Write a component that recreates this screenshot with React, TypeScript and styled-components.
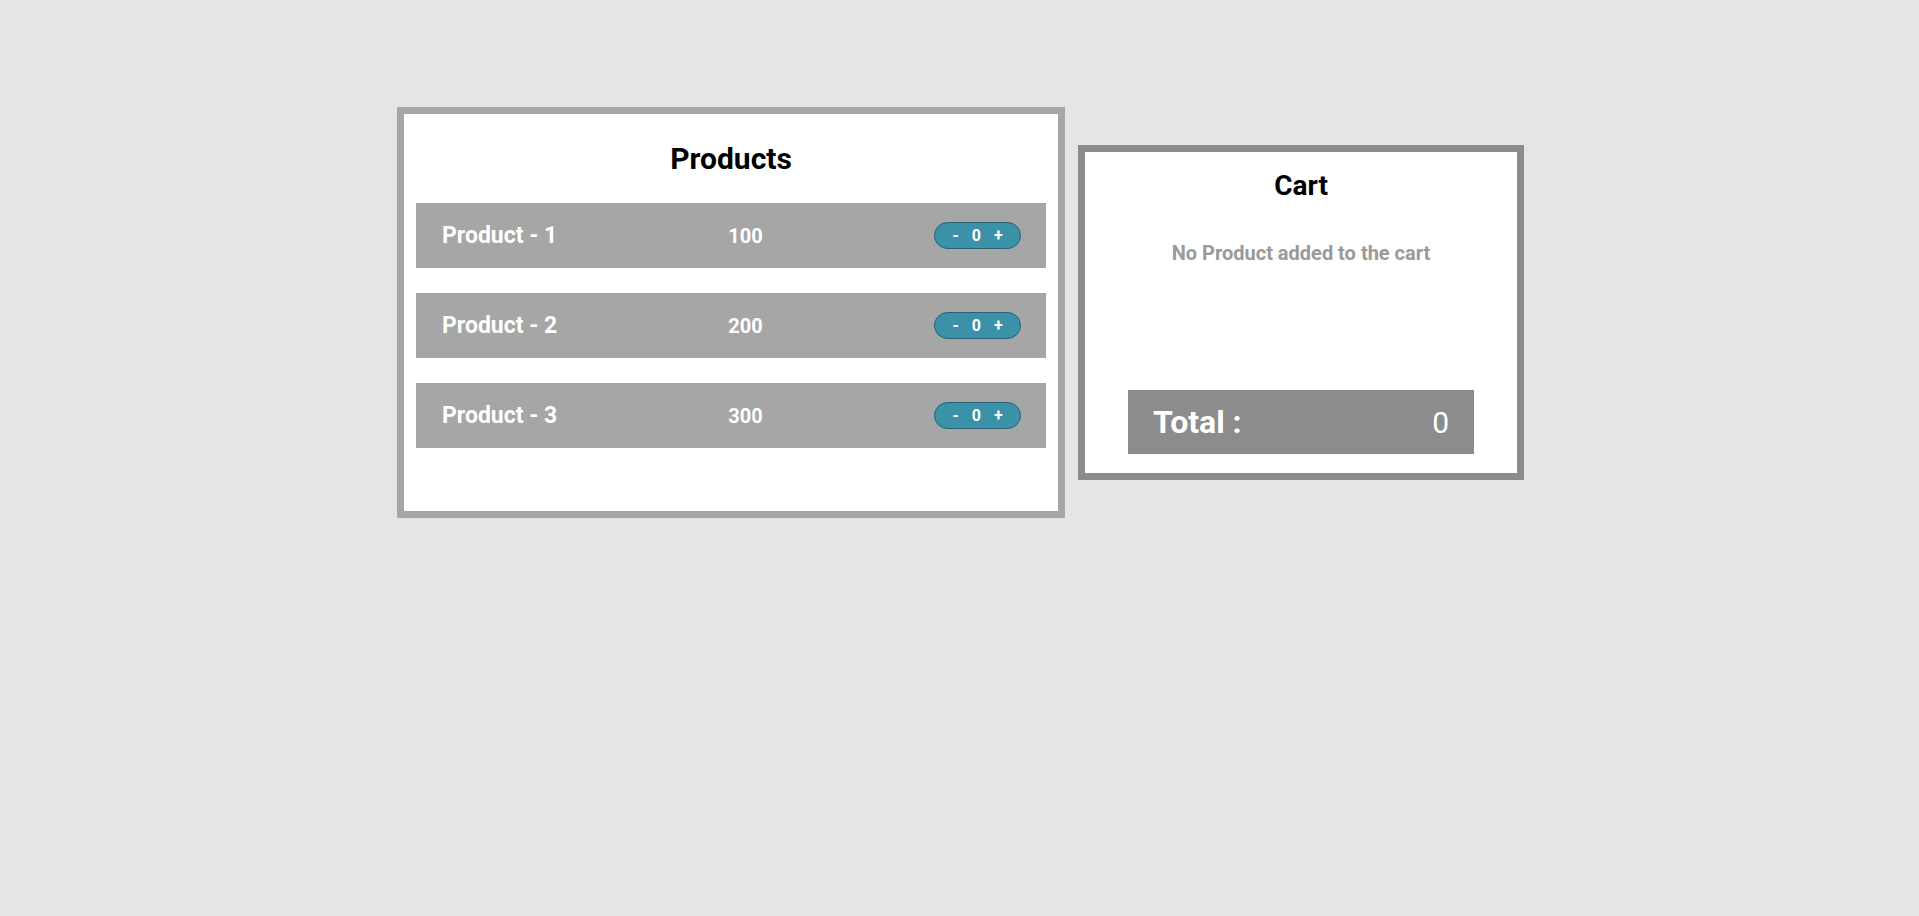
import React from "react";
import styled, { createGlobalStyle } from "styled-components";

const GlobalStyle = createGlobalStyle`
  html, body {
    margin: 0;
    padding: 0;
    background: #e5e5e5;
    font-family: Roboto, "Liberation Sans", Arial, sans-serif;
  }
  * { box-sizing: border-box; }
`;

const Page = styled.main`
  min-height: 916px;
  display: flex;
  justify-content: center;
  align-items: flex-start;
  padding: 107px 0 0 2px;
`;

const Layout = styled.div`
  display: flex;
  align-items: center;
  gap: 13px;
`;

const Panel = styled.section<{ $border: string; $width: number }>`
  width: ${(p) => p.$width}px;
  background: #ffffff;
  border: 7px solid ${(p) => p.$border};
  display: flex;
  flex-direction: column;
`;

const ProductsBody = styled.div`
  padding: 0 12px 63px;
  display: flex;
  flex-direction: column;
  gap: 25px;
`;

const Title = styled.h2<{ $size: number }>`
  margin: 0;
  font-size: ${(p) => p.$size}px;
  line-height: 36px;
  font-weight: 700;
  color: #000;
  text-align: center;
`;

const ProductsTitle = styled(Title)`
  margin: 27px 0 1px;
`;

const Row = styled.div`
  height: 65px;
  background: #a6a6a6;
  padding: 0 25px 0 26px;
  display: flex;
  align-items: center;
  justify-content: space-between;
  color: #fff;
`;

const Name = styled.span`
  font-size: 23px;
  font-weight: 700;
  white-space: nowrap;
`;

const Price = styled.span`
  font-size: 20px;
  font-weight: 700;
`;

const Counter = styled.div`
  width: 87px;
  height: 27px;
  border-radius: 14px;
  background: #3a91a8;
  border: 1px solid #2a6073;
  display: flex;
  align-items: center;
  justify-content: center;
  gap: 12px;
  color: #fff;
  font-size: 16px;
  font-weight: 700;
`;

const CountButton = styled.button`
  background: none;
  border: none;
  padding: 0 1px;
  color: #fff;
  font: inherit;
  cursor: pointer;
  line-height: 1;
`;

const Count = styled.span`
  line-height: 1;
`;

const CartBody = styled.div`
  display: flex;
  flex-direction: column;
  padding: 17px 43px 19px;
`;

const CartTitle = styled(Title)`
  line-height: 34px;
`;

const Empty = styled.p`
  margin: 38px 0 0;
  height: 149px;
  font-size: 20px;
  line-height: 24px;
  font-weight: 700;
  color: #9a9a9a;
  text-align: center;
`;

const TotalBar = styled.div`
  height: 64px;
  background: #8c8c8c;
  padding: 0 25px;
  display: flex;
  align-items: center;
  justify-content: space-between;
  color: #fff;
`;

const TotalLabel = styled.span`
  font-size: 32px;
  font-weight: 700;
`;

const TotalValue = styled.span`
  font-size: 30px;
  font-weight: 400;
`;

const products = [
  { id: 1, name: "Product - 1", price: 100 },
  { id: 2, name: "Product - 2", price: 200 },
  { id: 3, name: "Product - 3", price: 300 },
];

export default function App() {
  return (
    <>
      <GlobalStyle />
      <Page>
        <Layout>
          <Panel $border="#a6a6a6" $width={668}>
            <ProductsBody>
              <ProductsTitle $size={30}>Products</ProductsTitle>
              {products.map((p) => (
                <Row key={p.id}>
                  <Name>{p.name}</Name>
                  <Price>{p.price}</Price>
                  <Counter>
                    <CountButton>-</CountButton>
                    <Count>0</Count>
                    <CountButton>+</CountButton>
                  </Counter>
                </Row>
              ))}
            </ProductsBody>
          </Panel>
          <Panel $border="#8c8c8c" $width={446}>
            <CartBody>
              <CartTitle $size={28}>Cart</CartTitle>
              <Empty>No Product added to the cart</Empty>
              <TotalBar>
                <TotalLabel>Total :</TotalLabel>
                <TotalValue>0</TotalValue>
              </TotalBar>
            </CartBody>
          </Panel>
        </Layout>
      </Page>
    </>
  );
}
